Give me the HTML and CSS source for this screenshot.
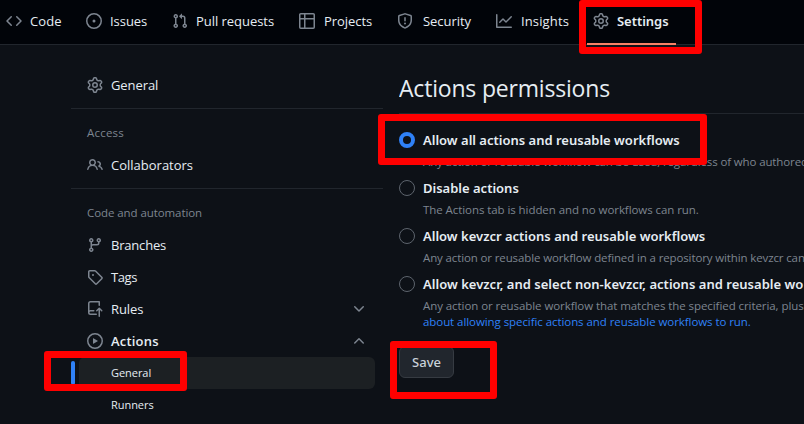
FILE: index.html
```
<!DOCTYPE html>
<html lang="en">
<head>
<meta charset="utf-8">
<title>Actions permissions</title>
<link rel="stylesheet" href="styles.css">
</head>
<body>
<svg class="sprite" aria-hidden="true">
  <symbol id="gear" viewBox="0 0 16 16"><path d="M8 0a8.200 8.200 0 0 1 .701.031C9.444.095 9.990.645 10.160 1.290l.288 1.107c.018.066.079.158.212.224.231.114.454.243.668.386.123.082.233.090.299.071l1.103-.303c.644-.176 1.392.021 1.820.630.270.385.506.792.704 1.218.315.675.111 1.422-.364 1.891l-.814.806c-.049.048-.098.147-.088.294.016.257.016.515 0 .772-.010.147.038.246.088.294l.814.806c.475.469.679 1.216.364 1.891a7.977 7.977 0 0 1-.704 1.217c-.428.610-1.176.807-1.820.630l-1.102-.302c-.067-.019-.177-.011-.300.071a5.909 5.909 0 0 1-.668.386c-.133.066-.194.158-.211.224l-.290 1.106c-.168.646-.715 1.196-1.458 1.260a8.006 8.006 0 0 1-1.402 0c-.743-.064-1.289-.614-1.458-1.260l-.289-1.106c-.018-.066-.079-.158-.212-.224a5.738 5.738 0 0 1-.668-.386c-.123-.082-.233-.090-.299-.071l-1.103.303c-.644.176-1.392-.021-1.820-.630a8.120 8.120 0 0 1-.704-1.218c-.315-.675-.111-1.422.363-1.891l.815-.806c.050-.048.098-.147.088-.294a6.214 6.214 0 0 1 0-.772c.010-.147-.038-.246-.088-.294l-.815-.806C.635 6.045.431 5.298.746 4.623a7.920 7.920 0 0 1 .704-1.217c.428-.610 1.176-.807 1.820-.630l1.102.302c.067.019.177.011.300-.071.214-.143.437-.272.668-.386.133-.066.194-.158.211-.224l.290-1.106C6.009.645 6.556.095 7.299.030 7.530.010 7.764 0 8 0Zm-.571 1.525c-.036.003-.108.036-.137.146l-.289 1.105c-.147.561-.549.967-.998 1.189-.173.086-.340.183-.500.290-.417.278-.970.423-1.529.270l-1.103-.303c-.109-.030-.175.016-.195.045-.220.312-.412.644-.573.990-.014.031-.021.110.059.190l.815.806c.411.406.562.957.530 1.456a4.709 4.709 0 0 0 0 .582c.032.499-.119 1.050-.530 1.456l-.815.806c-.081.080-.073.159-.059.190.162.346.353.677.573.989.020.030.085.076.195.046l1.102-.303c.560-.153 1.113-.008 1.530.270.161.107.328.204.501.290.447.222.850.629.997 1.189l.289 1.105c.029.109.101.143.137.146a6.600 6.600 0 0 0 1.142 0c.036-.003.108-.036.137-.146l.289-1.105c.147-.561.549-.967.998-1.189.173-.086.340-.183.500-.290.417-.278.970-.423 1.529-.270l1.103.303c.109.029.175-.016.195-.045.220-.313.411-.644.573-.990.014-.031.021-.110-.059-.190l-.815-.806c-.411-.406-.562-.957-.530-1.456a4.709 4.709 0 0 0 0-.582c-.032-.499.119-1.050.530-1.456l.815-.806c.081-.080.073-.159.059-.190a6.464 6.464 0 0 0-.573-.989c-.020-.030-.085-.076-.195-.046l-1.102.303c-.560.153-1.113.008-1.530-.270a4.440 4.440 0 0 0-.501-.290c-.447-.222-.850-.629-.997-1.189l-.289-1.105c-.029-.110-.101-.143-.137-.146a6.600 6.600 0 0 0-1.142 0ZM11 8a3 3 0 1 1-6 0 3 3 0 0 1 6 0ZM9.500 8a1.500 1.500 0 1 0-3.001.001A1.500 1.500 0 0 0 9.500 8Z"/></symbol>
  <symbol id="code" viewBox="0 0 16 16"><path d="m11.280 3.220 4.250 4.250a.75.75 0 0 1 0 1.060l-4.250 4.250a.749.749 0 0 1-1.275-.326.749.749 0 0 1 .215-.734L13.940 8l-3.720-3.720a.75.75 0 0 1 1.060-1.060Zm-6.560 0a.75.75 0 0 1 1.060 1.060L2.060 8l3.720 3.720a.75.75 0 0 1-1.060 1.060L.470 8.530a.75.75 0 0 1 0-1.060Z"/></symbol>
  <symbol id="issue" viewBox="0 0 16 16"><path d="M8 9.500a1.500 1.500 0 1 0 0-3 1.500 1.500 0 0 0 0 3Z"/><path d="M8 0a8 8 0 1 1 0 16A8 8 0 0 1 8 0ZM1.500 8a6.500 6.500 0 1 0 13 0 6.500 6.500 0 0 0-13 0Z"/></symbol>
  <symbol id="pull" viewBox="0 0 16 16"><path d="M1.500 3.250a2.250 2.250 0 1 1 3 2.122v5.256a2.251 2.251 0 1 1-1.500 0V5.372A2.250 2.250 0 0 1 1.500 3.250Zm5.677-.177L9.573.677A.25.25 0 0 1 10 .854V2.500h1A2.500 2.500 0 0 1 13.500 5v5.628a2.251 2.251 0 1 1-1.500 0V5a1 1 0 0 0-1-1h-1v1.646a.25.25 0 0 1-.427.177L7.177 3.427a.25.25 0 0 1 0-.354ZM3.750 2.500a.75.75 0 1 0 0 1.500.75.75 0 0 0 0-1.500Zm0 9.500a.75.75 0 1 0 0 1.500.75.75 0 0 0 0-1.500Zm8.250.75a.75.75 0 1 0 1.500 0 .75.75 0 0 0-1.500 0Z"/></symbol>
  <symbol id="table" viewBox="0 0 16 16"><path d="M0 1.750C0 .784.784 0 1.750 0h12.500C15.216 0 16 .784 16 1.750v12.500A1.750 1.750 0 0 1 14.250 16H1.750A1.750 1.750 0 0 1 0 14.250ZM6.500 6.500v8h7.750a.25.25 0 0 0 .25-.25V6.500Zm8-1.500V1.750a.25.25 0 0 0-.25-.25H6.500V5Zm-13 1.500v7.750c0 .138.112.25.25.25H5v-8ZM5 5V1.500H1.750a.25.25 0 0 0-.25.25V5Z"/></symbol>
  <symbol id="shield" viewBox="0 0 16 16"><path d="M7.467.133a1.748 1.748 0 0 1 1.066 0l5.250 1.680A1.750 1.750 0 0 1 15 3.480V7c0 1.566-.320 3.182-1.303 4.682-.983 1.498-2.585 2.813-5.032 3.855a1.697 1.697 0 0 1-1.330 0c-2.447-1.042-4.049-2.357-5.032-3.855C1.320 10.182 1 8.566 1 7V3.480a1.755 1.755 0 0 1 1.217-1.667Zm.610 1.429a.25.25 0 0 0-.153 0l-5.250 1.680a.25.25 0 0 0-.174.238V7c0 1.358.275 2.666 1.057 3.860.784 1.194 2.121 2.340 4.366 3.297a.196.196 0 0 0 .154 0c2.245-.956 3.582-2.104 4.366-3.298C13.225 9.666 13.500 8.360 13.500 7V3.480a.251.251 0 0 0-.174-.237l-5.250-1.680ZM8.750 4.750v3a.75.75 0 0 1-1.500 0v-3a.75.75 0 0 1 1.500 0ZM9 10.500a1 1 0 1 1-2 0 1 1 0 0 1 2 0Z"/></symbol>
  <symbol id="graph" viewBox="0 0 16 16"><path d="M1.500 1.750V13.500h13.750a.75.75 0 0 1 0 1.500H.75a.75.75 0 0 1-.75-.75V1.750a.75.75 0 0 1 1.500 0Zm14.280 2.530-5.250 5.250a.75.75 0 0 1-1.060 0L7 7.060 4.280 9.780a.751.751 0 0 1-1.060-1.060l3.250-3.250a.75.75 0 0 1 1.060 0L10 7.940l4.720-4.720a.751.751 0 0 1 1.060 1.060Z"/></symbol>
  <symbol id="people" viewBox="0 0 16 16"><path d="M2 5.500a3.500 3.500 0 1 1 5.898 2.549 5.508 5.508 0 0 1 3.034 4.084.75.75 0 1 1-1.482.235 4 4 0 0 0-7.900 0 .75.75 0 0 1-1.482-.236A5.507 5.507 0 0 1 3.102 8.050 3.493 3.493 0 0 1 2 5.500ZM11 4a3.001 3.001 0 0 1 2.220 5.018 5.010 5.010 0 0 1 2.560 3.012.749.749 0 0 1-.885.954.752.752 0 0 1-.549-.514 3.507 3.507 0 0 0-2.522-2.372.75.75 0 0 1-.574-.730v-.352a.75.75 0 0 1 .416-.672A1.500 1.500 0 0 0 11 5.500.75.75 0 0 1 11 4Zm-5.500-.5a2 2 0 1 0 0 4 2 2 0 0 0 0-4Z"/></symbol>
  <symbol id="branch" viewBox="0 0 16 16"><path d="M9.500 3.250a2.250 2.250 0 1 1 3 2.122V6A2.500 2.500 0 0 1 10 8.500H6a1 1 0 0 0-1 1v1.128a2.251 2.251 0 1 1-1.500 0V5.372a2.250 2.250 0 1 1 1.500 0v1.836A2.493 2.493 0 0 1 6 7h4a1 1 0 0 0 1-1v-.628A2.250 2.250 0 0 1 9.500 3.250Zm-6 0a.75.75 0 1 0 1.500 0 .75.75 0 0 0-1.500 0Zm8.250-.75a.75.75 0 1 0 0 1.500.75.75 0 0 0 0-1.500ZM4.250 12a.75.75 0 1 0 0 1.500.75.75 0 0 0 0-1.500Z"/></symbol>
  <symbol id="tag" viewBox="0 0 16 16"><path d="M1 7.775V2.750C1 1.784 1.784 1 2.750 1h5.025c.464 0 .910.184 1.238.513l6.250 6.250a1.750 1.750 0 0 1 0 2.474l-5.026 5.026a1.750 1.750 0 0 1-2.474 0l-6.250-6.250A1.752 1.752 0 0 1 1 7.775Zm1.500 0c0 .066.026.130.073.177l6.250 6.250a.25.25 0 0 0 .354 0l5.025-5.025a.25.25 0 0 0 0-.354l-6.250-6.250a.25.25 0 0 0-.177-.073H2.750a.25.25 0 0 0-.25.25ZM6 5a1 1 0 1 1 0 2 1 1 0 0 1 0-2Z"/></symbol>
  <symbol id="repo-push" viewBox="0 0 16 16"><path d="M1 2.500A2.500 2.500 0 0 1 3.500 0h8.750a.75.75 0 0 1 .75.75v3.500a.75.75 0 0 1-1.500 0V1.500h-8a1 1 0 0 0-1 1v6.708A2.493 2.493 0 0 1 3.500 9h3.250a.75.75 0 0 1 0 1.500H3.500a1 1 0 0 0 0 2h5.750a.75.75 0 0 1 0 1.500H3.500A2.500 2.500 0 0 1 1 11.500Zm13.230 7.790-1.230-1.224v6.184a.75.75 0 0 1-1.500 0V9.066L10.280 10.290a.75.75 0 0 1-1.060-1.061l2.505-2.504a.75.75 0 0 1 1.060 0L15.290 9.230a.751.751 0 0 1-1.060 1.060Z"/></symbol>
  <symbol id="play" viewBox="0 0 16 16"><path d="M8 0a8 8 0 1 1 0 16A8 8 0 0 1 8 0ZM1.500 8a6.500 6.500 0 1 0 13 0 6.500 6.500 0 0 0-13 0Zm4.879-2.773 4.264 2.559a.25.25 0 0 1 0 .428l-4.264 2.559A.25.25 0 0 1 6 10.559V5.442a.25.25 0 0 1 .379-.215Z"/></symbol>
  <symbol id="down" viewBox="0 0 16 16"><path d="M12.780 5.220a.749.749 0 0 1 0 1.060l-4.250 4.250a.749.749 0 0 1-1.060 0L3.220 6.280a.749.749 0 1 1 1.060-1.060L8 8.939l3.720-3.719a.749.749 0 0 1 1.060 0Z"/></symbol>
  <symbol id="up" viewBox="0 0 16 16"><path d="M3.220 10.530a.749.749 0 0 1 0-1.060l4.250-4.250a.749.749 0 0 1 1.060 0l4.250 4.250a.749.749 0 1 1-1.060 1.060L8 6.811 4.280 10.530a.749.749 0 0 1-1.060 0Z"/></symbol>
</svg>

<nav class="tabs">
  <a class="tab"><svg><use href="#code"/></svg><span class="wide">Code</span></a>
  <a class="tab"><svg><use href="#issue"/></svg>Issues</a>
  <a class="tab"><svg><use href="#pull"/></svg>Pull requests</a>
  <a class="tab tab-projects"><svg><use href="#table"/></svg>Projects</a>
  <a class="tab tab-roomy"><svg><use href="#shield"/></svg>Security</a>
  <a class="tab tab-projects"><svg><use href="#graph"/></svg><span class="wide">Insights</span></a>
  <a class="tab selected"><svg><use href="#gear"/></svg>Settings</a>
</nav>

<div class="layout">
  <aside class="sidebar">
    <a class="item"><svg><use href="#gear"/></svg>General</a>
    <section class="group">
      <h2>Access</h2>
      <a class="item collaborators"><svg><use href="#people"/></svg>Collaborators</a>
    </section>
    <section class="group">
      <h2 class="snug">Code and automation</h2>
      <a class="item branches"><svg><use href="#branch"/></svg>Branches</a>
      <a class="item tight"><svg><use href="#tag"/></svg>Tags</a>
      <a class="item"><svg><use href="#repo-push"/></svg>Rules<svg class="chevron"><use href="#down"/></svg></a>
      <a class="item open"><svg><use href="#play"/></svg>Actions<svg class="chevron"><use href="#up"/></svg></a>
      <a class="subitem current">General</a>
      <a class="subitem">Runners</a>
    </section>
  </aside>

  <main class="content">
    <h1>Actions permissions</h1>
    <div class="option"><i class="radio checked"></i><div><b>Allow all actions and reusable workflows</b><p class="narrow">Any action or reusable workflow can be used, regardless of who authored</p></div></div>
    <div class="option"><i class="radio"></i><div><b>Disable actions</b><p>The Actions tab is hidden and no workflows can run.</p></div></div>
    <div class="option"><i class="radio"></i><div><b>Allow kevzcr actions and reusable workflows</b><p class="narrow">Any action or reusable workflow defined in a repository within kevzcr can</p></div></div>
    <div class="option"><i class="radio"></i><div><b class="wider">Allow kevzcr, and select non-kevzcr, actions and reusable wo</b><p>Any action or reusable workflow that matches the specified criteria, plus<br><a>about allowing specific actions and reusable workflows to run.</a></p></div></div>
    <button class="save">Save</button>
  </main>
</div>

<div class="mark mark-settings"></div>
<div class="mark mark-allow"></div>
<div class="mark mark-general"></div>
<div class="mark mark-save"></div>
</body>
</html>
```
FILE: styles.css
```
* { box-sizing: border-box; }
body {
  margin: 0;
  width: 804px;
  height: 424px;
  overflow: hidden;
  position: relative;
  background: #0d1117;
  color: #e6edf3;
  font: 13px/20px "Open Sans", "Noto Sans", sans-serif;
}
svg { width: 16px; height: 16px; flex: none; fill: #7d8590; }
.sprite { position: absolute; width: 0; height: 0; }

.tabs {
  display: grid;
  grid-template-columns: 80px 86px 127px 98px 99px 97px 89px;
  height: 45px;
  background: #010409;
  border-bottom: 1px solid #21262d;
}
.tab {
  display: flex;
  align-items: center;
  gap: 8px;
  height: 45px;
  padding: 0 0 3px 6px;
  white-space: nowrap;
  letter-spacing: -.04px;
}
.tab-projects { gap: 9px; }
.tab-roomy { gap: 10px; }
.wide { letter-spacing: .13px; }
.tab.selected {
  padding-bottom: 1px;
  border-bottom: 2px solid #f78166;
  font-family: "Noto Sans", sans-serif;
  font-weight: 600;
}

.layout { display: flex; gap: 16px; padding-left: 71px; }
.sidebar { width: 312px; flex: none; padding-top: 24px; }
.item {
  display: flex;
  align-items: center;
  gap: 8px;
  height: 32px;
  padding: 0 16px;
  letter-spacing: -.08px;
}
.item.collaborators { letter-spacing: 0; }
.item.branches { letter-spacing: -.2px; }
.item.tight { letter-spacing: -.4px; }
.item.open { font-weight: 600; letter-spacing: .2px; }
.chevron { margin-left: auto; }
.group { margin-top: 7px; border-top: 1px solid #21262d; padding-top: 8px; }
.group h2 {
  margin: 0;
  padding: 0 16px;
  height: 32px;
  font-size: 11.5px;
  font-weight: 400;
  line-height: 32px;
  letter-spacing: .2px;
  color: #7d8590;
}
.group h2.snug { letter-spacing: -.08px; }
.subitem {
  display: block;
  height: 32px;
  margin: 0 8px;
  padding-left: 32px;
  border-radius: 6px;
  font-size: 11px;
  line-height: 32px;
  letter-spacing: -.05px;
}
.current { position: relative; background: #1c2023; }
.current::before {
  content: "";
  position: absolute;
  left: -8px;
  top: 4px;
  width: 4px;
  height: 24px;
  border-radius: 3px;
  background: #2f81f7;
}

.content { flex: 1; min-width: 0; overflow: hidden; padding-top: 24px; }
h1 {
  margin: 0 0 16px;
  height: 45px;
  border-bottom: 1px solid #21262d;
  font-size: 23px;
  font-weight: 400;
  line-height: 38px;
  letter-spacing: -.19px;
}
.option { display: flex; gap: 8px; min-height: 48px; white-space: nowrap; }
.option b {
  display: block;
  font-family: "Noto Sans", sans-serif;
  font-weight: 600;
  line-height: 20px;
}
.option b.wider { letter-spacing: .02px; }
.option p {
  margin: 4px 0 0;
  font-size: 11.5px;
  line-height: 16px;
  letter-spacing: -.07px;
  color: #7d8590;
}
.option p.narrow { letter-spacing: -.125px; }
.option a { color: #2f81f7; }
.radio {
  width: 16px;
  height: 16px;
  margin-top: 2px;
  flex: none;
  border: 1px solid #5d646d;
  border-radius: 50%;
}
.radio.checked { border: 4px solid #2f81f7; }
.save {
  display: block;
  width: 55px;
  height: 32px;
  margin-top: 16px;
  padding: 0;
  border: 1px solid #363b42;
  border-radius: 6px;
  background: #21262d;
  color: #c9d1d9;
  font: 500 13px/20px "Noto Sans", sans-serif;
}

.mark { position: absolute; border: 7px solid #f00; border-radius: 3px; }
.mark-settings { left: 579px; top: 0; width: 123px; height: 54px; }
.mark-allow { left: 378px; top: 114px; width: 329px; height: 51px; }
.mark-general { left: 44px; top: 351px; width: 143px; height: 40px; }
.mark-save { left: 390px; top: 341px; width: 107px; height: 58px; }
```
